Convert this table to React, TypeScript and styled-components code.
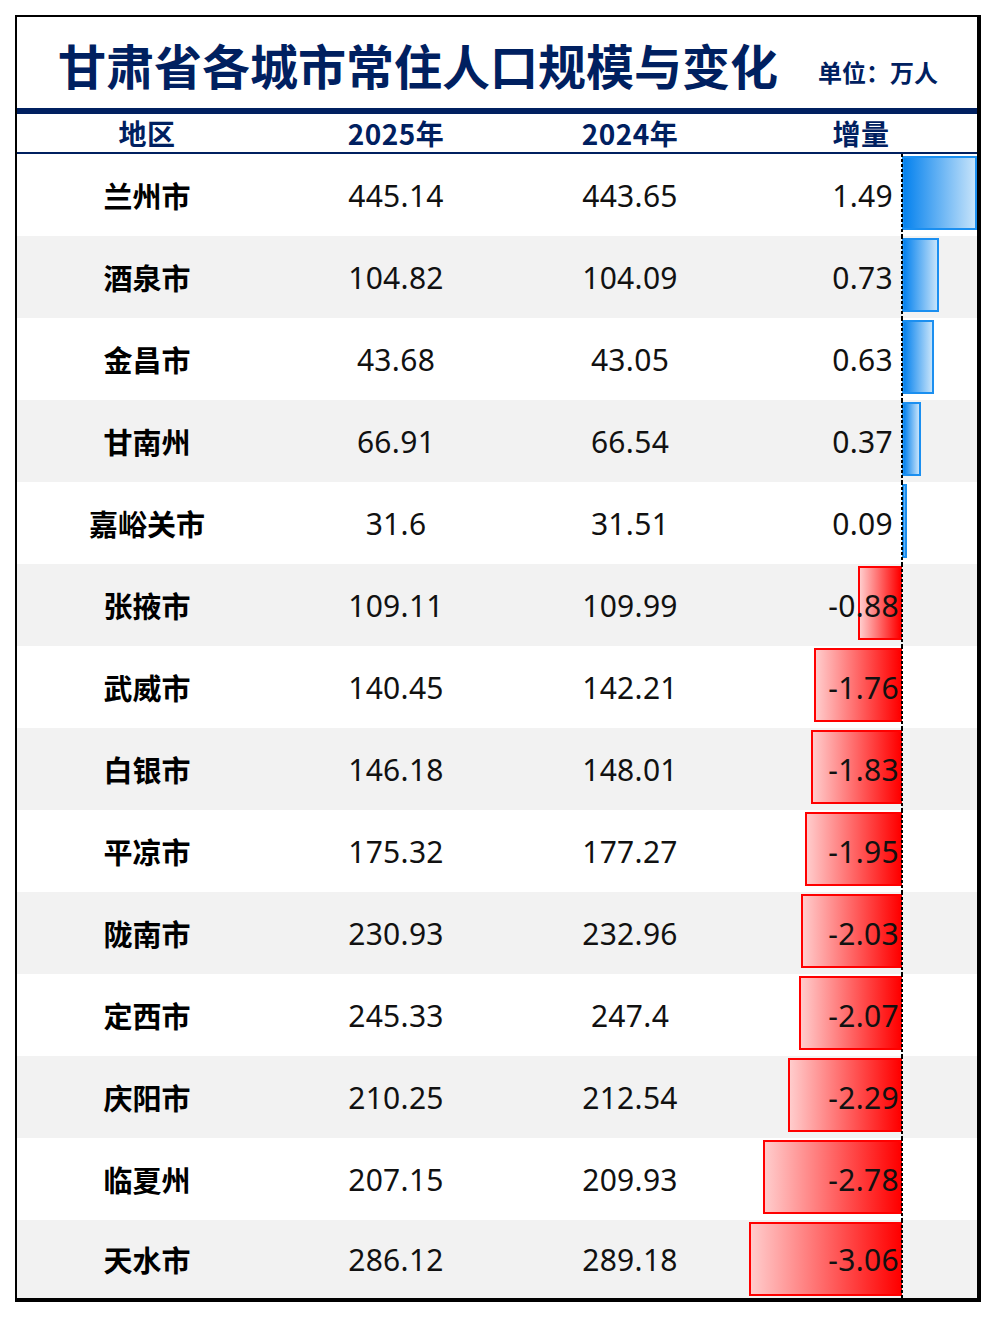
import React from "react";
import styled, { createGlobalStyle } from "styled-components";

interface CityRow {
  name: string;
  y2025: string;
  y2024: string;
  delta: number;
}

const rows: CityRow[] = [
  { name: "兰州市", y2025: "445.14", y2024: "443.65", delta: 1.49 },
  { name: "酒泉市", y2025: "104.82", y2024: "104.09", delta: 0.73 },
  { name: "金昌市", y2025: "43.68", y2024: "43.05", delta: 0.63 },
  { name: "甘南州", y2025: "66.91", y2024: "66.54", delta: 0.37 },
  { name: "嘉峪关市", y2025: "31.6", y2024: "31.51", delta: 0.09 },
  { name: "张掖市", y2025: "109.11", y2024: "109.99", delta: -0.88 },
  { name: "武威市", y2025: "140.45", y2024: "142.21", delta: -1.76 },
  { name: "白银市", y2025: "146.18", y2024: "148.01", delta: -1.83 },
  { name: "平凉市", y2025: "175.32", y2024: "177.27", delta: -1.95 },
  { name: "陇南市", y2025: "230.93", y2024: "232.96", delta: -2.03 },
  { name: "定西市", y2025: "245.33", y2024: "247.4", delta: -2.07 },
  { name: "庆阳市", y2025: "210.25", y2024: "212.54", delta: -2.29 },
  { name: "临夏州", y2025: "207.15", y2024: "209.93", delta: -2.78 },
  { name: "天水市", y2025: "286.12", y2024: "289.18", delta: -3.06 },
];

const AXIS = 157; // px from left of the delta cell
const SCALE = 50; // px per 万人

const GlobalStyle = createGlobalStyle`
  body {
    margin: 15px;
    background: #ffffff;
    font-family: "Noto Sans", "Noto Sans CJK SC", sans-serif;
  }
`;

const Frame = styled.div`
  border-style: solid;
  border-color: #000;
  border-width: 2px 4px 4px 2px;
  background: #fff;
  overflow: hidden;
`;

const TitleBar = styled.div`
  height: 97px;
  box-sizing: border-box;
  padding: 4px 39px 0 41px;
  display: flex;
  align-items: baseline;
  justify-content: space-between;
  border-bottom: 6px solid #002060;
  line-height: 87px;
`;

const Title = styled.h1`
  margin: 0;
  font-family: "Noto Sans CJK SC", sans-serif;
  font-size: 48px;
  font-weight: 700;
  color: #002060;
`;

const Unit = styled.span`
  position: relative;
  top: -3px;
  font-family: "Noto Sans CJK SC", sans-serif;
  font-size: 24px;
  font-weight: 700;
  color: #002060;
`;

const Grid = styled.div`
  display: grid;
  grid-template-columns: 260px 238px 230px 1fr;
  align-items: center;
`;

const HeaderRow = styled(Grid)`
  height: 38px;
  border-bottom: 2px solid #002060;
`;

const HeaderCell = styled.div`
  text-align: center;
  font-family: "Noto Sans CJK SC", sans-serif;
  font-size: 28px;
  font-weight: 700;
  letter-spacing: 0.5px;
  color: #002060;
  line-height: 34px;
`;

const Row = styled(Grid)<{ $alt: boolean }>`
  height: 82px;
  background: ${(p) => (p.$alt ? "#f2f2f2" : "#ffffff")};

  &:last-child {
    height: 78px;
  }
`;

const NameCell = styled.div`
  text-align: center;
  font-family: "Noto Sans CJK SC", sans-serif;
  font-size: 29px;
  font-weight: 700;
  color: #000;
`;

const NumCell = styled.div`
  text-align: center;
  font-family: "Noto Sans", sans-serif;
  font-size: 30px;
  letter-spacing: 0.3px;
  color: #111;
`;

const DeltaCell = styled.div`
  position: relative;
  height: 100%;
  display: flex;
  align-items: center;
`;

const DeltaValue = styled.span<{ $neg: boolean }>`
  position: relative;
  z-index: 1;
  width: ${AXIS}px;
  box-sizing: border-box;
  padding-right: ${(p) => (p.$neg ? 3 : 9)}px;
  text-align: right;
  font-family: "Noto Sans", sans-serif;
  font-size: 30px;
  letter-spacing: 0.3px;
  color: #111;
`;

const Bar = styled.div<{ $neg: boolean }>`
  position: absolute;
  top: 2px;
  height: 74px;
  box-sizing: border-box;
  border: 2px solid ${(p) => (p.$neg ? "#ff0000" : "#1b8ff0")};
  background: ${(p) =>
    p.$neg
      ? "linear-gradient(to right, #ffcccc, #ff0000)"
      : "linear-gradient(to right, #0582ee, #c6e3fa)"};
`;

const Axis = styled.div`
  position: absolute;
  left: ${AXIS - 1}px;
  top: 0;
  bottom: 0;
  width: 2px;
  z-index: 2;
  background: repeating-linear-gradient(
    to bottom,
    #000 0 3px,
    transparent 3px 5px
  );
`;

const DeltaBar: React.FC<{ value: number }> = ({ value }) => {
  const neg = value < 0;
  const w = Math.max(Math.abs(value) * SCALE, 4);
  const left = neg ? AXIS - w : AXIS;
  return <Bar $neg={neg} style={{ left, width: w }} />;
};

export default function App() {
  return (
    <>
      <GlobalStyle />
      <Frame>
        <TitleBar>
          <Title>甘肃省各城市常住人口规模与变化</Title>
          <Unit>单位：万人</Unit>
        </TitleBar>
        <HeaderRow>
          <HeaderCell>地区</HeaderCell>
          <HeaderCell>2025年</HeaderCell>
          <HeaderCell>2024年</HeaderCell>
          <HeaderCell>增量</HeaderCell>
        </HeaderRow>
        {rows.map((r, i) => (
          <Row key={r.name} $alt={i % 2 === 1}>
            <NameCell>{r.name}</NameCell>
            <NumCell>{r.y2025}</NumCell>
            <NumCell>{r.y2024}</NumCell>
            <DeltaCell>
              <DeltaBar value={r.delta} />
              <DeltaValue $neg={r.delta < 0}>{r.delta.toFixed(2)}</DeltaValue>
              <Axis />
            </DeltaCell>
          </Row>
        ))}
      </Frame>
    </>
  );
}
